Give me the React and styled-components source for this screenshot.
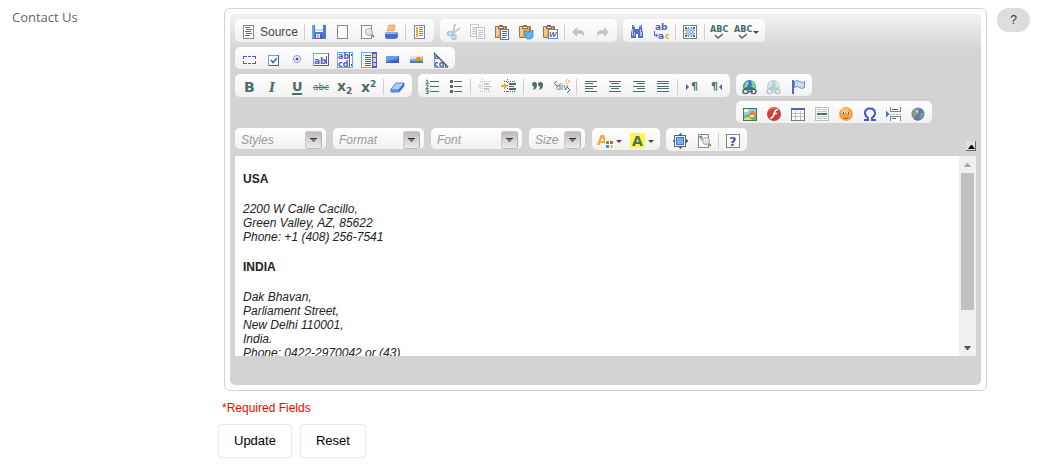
import React from "react";
import styled, { createGlobalStyle, css } from "styled-components";

const GlobalStyle = createGlobalStyle`
  body {
    margin: 0;
    background: #fff;
    font-family: "Liberation Sans", Arial, sans-serif;
    font-size: 12px;
    line-height: 14px;
  }
`;

const Page = styled.form`
  display: grid;
  grid-template-columns: 206px 1fr auto;
  align-items: start;
  padding: 8px 15px 8px 12px;
`;

const FieldLabel = styled.label`
  color: #666;
  font-family: "Open Sans", sans-serif;
  font-size: 13px;
  line-height: 18px;
`;

const Frame = styled.div`
  margin-left: 6px;
  padding: 5px;
  border: 1px solid #d3d3d3;
  border-radius: 6px;
`;

const EditorBox = styled.div`
  padding: 5px 5px 29px;
  border-radius: 5px;
  background: linear-gradient(#f2f2f2, #d3d3d3 38px) #d3d3d3;
`;

const Toolbars = styled.div`
  display: flex;
  flex-direction: column;
  gap: 5px;
  margin-bottom: 5px;
`;

const Row = styled.div`
  display: flex;
  align-items: flex-start;
  gap: ${(p) => p.$gap || 6}px;
`;

const Stack = styled.div`
  display: flex;
  flex-direction: column;
  align-items: flex-start;
  gap: 5px;
`;

const Group = styled.div`
  display: flex;
  align-items: flex-start;
  padding: 3px 2px 1px;
  border-radius: 5px;
  background: linear-gradient(#fff, #f1f1f1);
`;

const ToolButton = styled.button`
  display: flex;
  align-items: center;
  height: 18px;
  padding: 2px 4px 0;
  border: 0;
  background: none;
  color: #474747;
  font: 12px/16px "Liberation Sans", Arial, sans-serif;
  cursor: pointer;

  svg {
    flex: none;
    overflow: visible;
  }

  ${(p) =>
    p.disabled &&
    css`
      cursor: default;
      svg {
        opacity: 0.33;
      }
    `}
`;

const ButtonText = styled.span`
  margin-left: 3px;
`;

const Arrow = styled.span`
  margin: 0 0 0 2px;
  border: 3px solid transparent;
  border-top-color: #474747;
  border-bottom: 0;
`;

const Separator = styled.span`
  width: 1px;
  height: 16px;
  margin: 2px 2px 1px;
  background: #d0d0d0;
`;

const ComboWrap = styled.label`
  position: relative;
  display: block;
  width: ${(p) => p.$width}px;
`;

const ComboSelect = styled.select`
  display: block;
  width: 100%;
  height: 21px;
  padding: 2px 24px 0 6px;
  border: 0;
  border-radius: 5px;
  appearance: none;
  background: linear-gradient(#fff, #f1f1f1);
  color: #999;
  font: italic 12px "Liberation Sans", Arial, sans-serif;
`;

const ComboArrow = styled.span`
  position: absolute;
  top: 3px;
  right: 4px;
  display: flex;
  align-items: center;
  justify-content: center;
  width: 17px;
  height: 18px;
  border-radius: 3px;
  box-sizing: border-box;
  border: 1px solid #cfc9c9;
  border-right-color: #b5aeae;
  border-bottom-color: #c3bcbc;
  background: linear-gradient(#c0b8b8, #efebeb);
  pointer-events: none;
`;

const Collapser = styled.button`
  align-self: flex-end;
  display: flex;
  align-items: flex-end;
  justify-content: center;
  width: 10px;
  height: 10px;
  margin-left: auto;
  padding: 0 0 1px 1px;
  border: 0 solid #6b6b6b;
  border-width: 0 1px 1px 0;
  background: #dfdfdf;
`;

const Contents = styled.div`
  display: flex;
  height: 200px;
  background: #fff;
`;

const Editable = styled.div`
  flex: 1;
  overflow: hidden;
  padding: 16px 8px 0;
  color: #222;
  outline: none;

  p {
    margin: 0 0 16px;
  }
`;

const ScrollTrack = styled.div`
  display: flex;
  flex-direction: column;
  align-items: center;
  width: 17px;
  background: #f0f0f0;
`;

const ScrollEnd = styled.span`
  display: flex;
  align-items: center;
  justify-content: center;
  height: 17px;
`;

const ScrollThumb = styled.div`
  width: 13px;
  height: 137px;
  margin-bottom: auto;
  background: #c1c1c1;
`;

const Required = styled.p`
  margin: 10px 0 9px 4px;
  color: #f00;
`;

const FormButton = styled.button`
  height: 34px;
  padding: 0 15px 2px;
  border: 1px solid #eaeaea;
  border-radius: 4px;
  background: #fff;
  box-shadow: 0 0 1px #e6e6e6;
  color: #000;
  font: 13px "Liberation Sans", Arial, sans-serif;
`;

const HelpButton = styled.button`
  width: 33px;
  height: 24px;
  margin-left: 10px;
  padding: 0;
  border: 0;
  border-radius: 12px;
  background: #ddd;
  color: #1f3a52;
  font: 12px "Liberation Sans", Arial, sans-serif;
`;

const T = "#4f6b6b";
const B = "#5459bd";
const L = "#6aa6f2";
const O = "#f3a847";

const Glyph = ({ x, y, size, fill = T, children, family = "DejaVu Sans", ...rest }) => (
  <text x={x} y={y} fontSize={size} fill={fill} fontFamily={family} {...rest}>
    {children}
  </text>
);

const Clipboard = () => (
  <>
    <rect x="1" y="2" width="12" height="12" rx="1" fill="#b5722c" />
    <rect x="2" y="3" width="9" height="10" fill="#eba450" />
    <path d="M2 3h3v8l-3 2z" fill="#f9c987" />
    <path d="M4 3h1V1h4v2h1v2H4z" fill="#6f7478" />
    <path d="M5 3h4v1H5z" fill="#e9e3d8" />
  </>
);

const Lens = ({ x, y }) => (
  <>
    <path d={`M${x + 2} ${y + 2}l3 3`} stroke="#c8843c" strokeWidth="2" />
    <circle cx={x} cy={y} r="3.5" fill="#dfe5ea" stroke="#a5aaae" />
    <path d={`M${x - 2} ${y}q0-2 2-2`} stroke="#fff" fill="none" />
  </>
);

const Chain = () => (
  <g fill="none" stroke={T} strokeWidth="1.6">
    <rect x="1" y="10.5" width="5" height="4" rx="2" />
    <rect x="9" y="10.5" width="5" height="4" rx="2" />
    <path d="M5 12.5h6M3 10l2-1h5l2 1" />
  </g>
);

const LinkGlobe = () => (
  <>
    <circle cx="7.5" cy="7.5" r="6.5" fill="#3f6fdc" />
    <path d="M3 4l3-2 1 2-2 4-3 1zM9 2l3 1 2 4-2 3-3-2 1-2z" fill="#74e277" />
    <path d="M0 11h15v4H0z" fill="#f8f8f8" />
    <Chain />
  </>
);

const Sheet = ({ color = "#7c8c8a" }) => (
  <rect x="2.5" y="1.5" width="10" height="13" fill="#fff" stroke={color} />
);

const Lines = ({ rows, stroke = T }) => (
  <path
    d={rows.map(([x, y, w]) => `M${x} ${y}.5h${w}`).join("")}
    stroke={stroke}
    fill="none"
  />
);

const AreaLetters = () => (
  <>
    <Glyph x="1" y="7" size="8" fill={B} fontWeight="bold">ab</Glyph>
    <Glyph x="1" y="15" size="8" fill={B} fontWeight="bold">cd</Glyph>
  </>
);

const icons = {
  source: (
    <>
      <Sheet />
      <Lines rows={[[4, 3, 5], [5, 5, 6], [4, 7, 6], [5, 9, 6], [4, 11, 5]]} stroke="#5d7466" />
    </>
  ),
  save: (
    <>
      <path d="M1 1h13l1 1v13H1z" fill="#4a78dc" />
      <path d="M1 1h2v13H1z" fill={L} />
      <rect x="4" y="1" width="8" height="7" fill="#fff" />
      <rect x="4" y="5" width="8" height="2" fill="#c6dcf5" />
      <rect x="4" y="10" width="8" height="5" fill="#4c64b0" />
      <rect x="5" y="10" width="4" height="4" fill="#d9e6f6" />
      <rect x="6" y="11" width="2" height="3" fill={O} />
    </>
  ),
  newpage: <Sheet />,
  preview: (
    <>
      <Sheet />
      <Lens x={10} y={8} />
    </>
  ),
  print: (
    <>
      <path d="M6 1h6l-1 6H4z" fill="#f3c16f" stroke="#dd9137" strokeWidth=".6" />
      <path d="M3 8h11l1 2v3l-2 2H3l-1-2v-3z" fill="#4b73d8" />
      <path d="M3 8h10l1 2H2z" fill="#86b2f5" />
      <path d="M3 12h10" stroke="#3d60c0" />
    </>
  ),
  templates: (
    <>
      <Sheet />
      <path d="M4 3h2v10H4z" fill={O} />
      <Lines rows={[[7, 3, 4], [7, 5, 4], [7, 7, 4], [7, 9, 4], [7, 11, 4]]} stroke="#8c8468" />
    </>
  ),
  cut: (
    <>
      <path d="M9 0l-2 9M14 4l-8 6" stroke="#667" strokeWidth="2" />
      <ellipse cx="4" cy="9.5" rx="2.5" ry="1.8" fill="none" stroke="#3260c6" strokeWidth="2" />
      <ellipse cx="8" cy="13" rx="1.8" ry="2.2" fill="none" stroke="#3260c6" strokeWidth="2" />
    </>
  ),
  copy: (
    <>
      <rect x="0.5" y="0.5" width="8" height="12" fill="#fff" stroke={T} />
      <Lines rows={[[2, 3, 5], [2, 5, 5], [2, 7, 5], [2, 9, 5]]} />
      <rect x="6.5" y="3.5" width="8" height="11" fill="#fff" stroke={T} />
      <Lines rows={[[8, 6, 5], [8, 8, 5], [8, 10, 5], [8, 12, 4]]} />
    </>
  ),
  paste: (
    <>
      <Clipboard />
      <rect x="6.5" y="5.5" width="8" height="10" fill="#fff" stroke="#4a72d8" />
      <Lines rows={[[8, 7, 5], [8, 9, 5], [8, 11, 5], [8, 13, 4]]} stroke={B} />
    </>
  ),
  pastetext: (
    <>
      <Clipboard />
      <path d="M6 7l4 1 5-2v7l-2 2H9l-2-3z" fill="#55b5ee" stroke="#3c80c4" strokeWidth=".7" />
    </>
  ),
  pasteword: (
    <>
      <Clipboard />
      <rect x="6.5" y="5.5" width="9" height="9" fill="#fff" stroke="#5b83db" />
      <Glyph x="7" y="13" size="8" fontWeight="bold" fontStyle="italic" family="Liberation Sans">W</Glyph>
    </>
  ),
  undo: <path d="M1 8l5-5v3h4q4 1 3 7-1-4-7-3v3z" fill={T} />,
  redo: <path d="M14 8L9 3v3H6q-5 1-4 7 1-4 7-3v3z" fill={T} />,
  find: (
    <>
      <path d="M3 1h3v4h4V1h3v4l1 4v5H9v-4H7v4H2V9l1-4z" fill="#6068be" />
      <path d="M3 5h1v7H3zM11 5h1v7h-1zM4 1h2v2H4zM10 1h2v2h-2z" fill="#9acbf9" />
      <path d="M5 8h1v4H5zM12 8h1v4h-1z" fill="#a9b7df" />
    </>
  ),
  replace: (
    <>
      <Glyph x="2" y="6" size="9" fill={B} fontWeight="bold">ab</Glyph>
      <Glyph x="5" y="15" size="9" fill={B} fontWeight="bold">a</Glyph>
      <Glyph x="12" y="15" size="8" fill={O} fontWeight="bold">c</Glyph>
      <path d="M1.500 7v4.500h3M3 9.500l2 2-2 2" fill="none" stroke={B} />
    </>
  ),
  selectall: (
    <>
      <rect x="1.5" y="1.5" width="13" height="13" fill="#fff" stroke="#6f8585" />
      <rect x="4" y="4" width="8" height="8" fill="#aac4ee" />
      <path d="M3 3h2v2H3zM11 3h2v2h-2zM3 11h2v2H3zM11 11h2v2h-2zM6 3h1v1H6zM9 3h1v1H9zM6 12h1v1H6zM9 12h1v1H9zM3 6h1v1H3zM3 9h1v1H3zM12 6h1v1h-1zM12 9h1v1h-1z" fill={T} />
    </>
  ),
  abc: (
    <>
      <Glyph x="-1" y="8" size="9" fontWeight="bold" family="DejaVu Sans Condensed">ABC</Glyph>
      <path d="M4 11l3 3 5-4" fill="none" stroke={T} strokeWidth="1.6" />
    </>
  ),
  form: <path d="M2.5 7V4.5h3M7 4.5h3M11 4.5h3V7M2.5 9v2.500h3M7 11.500h3M11 11.500h3V9" fill="none" stroke={B} />,
  checkbox: (
    <>
      <rect x="3.5" y="3.5" width="10" height="10" fill="#fff" stroke={B} />
      <path d="M3.5 14V3.5H13" fill="none" stroke={L} />
      <path d="M6 8l2 2.500 4-4.500" fill="none" stroke="#3f62a8" strokeWidth="1.500" />
    </>
  ),
  radio: (
    <>
      <circle cx="8" cy="7" r="3.5" fill="#fff" stroke="#738fe0" />
      <circle cx="8" cy="7" r="1.5" fill="#4651b8" />
    </>
  ),
  textfield: (
    <>
      <rect x=".5" y="1.5" width="15" height="12" fill="#fff" stroke={B} />
      <path d="M.5 14V1.5H15" fill="none" stroke={L} />
      <Glyph x="1" y="12" size="9" fill={B} fontWeight="bold">ab</Glyph>
      <path d="M13.5 4v8" stroke={B} />
    </>
  ),
  textarea: (
    <>
      <rect x=".5" y=".5" width="15" height="15" fill="#fff" stroke={L} />
      <AreaLetters />
      <path d="M12.5 1v14M14 2v2M14 12v2" stroke={B} />
    </>
  ),
  select: (
    <>
      <rect x=".5" y=".5" width="15" height="15" fill="#fff" stroke={L} />
      <Lines rows={[[4, 3, 6], [4, 5, 6], [4, 7, 6], [4, 9, 6], [4, 11, 6], [4, 13, 6]]} stroke={B} />
      <path d="M2 3h1v1H2zM2 7h1v1H2zM2 11h1v1H2z" fill={O} />
      <rect x="11" y="0" width="5" height="16" fill={B} />
      <path d="M12 2h3v3h-3zM12 11h3v3h-3z" fill="#f7c37d" />
      <path d="M12 6h3v4h-3z" fill="#c5d6f7" />
    </>
  ),
  button: (
    <>
      <rect x="1" y="4" width="13" height="7" fill="#3d5cc4" />
      <path d="M1 4h12v4L1 10z" fill="#6b9cee" />
      <path d="M2 9h11V6z" fill="#4b70d2" />
    </>
  ),
  imagebutton: (
    <>
      <rect x="1" y="4" width="13" height="7" fill="#7ba9ee" />
      <path d="M1 4h12v3H1z" fill="#e7e3ce" />
      <path d="M6 8l2-3h3l3 4H6z" fill="#e68a35" />
      <path d="M1 9h13v2H1z" fill="#4d74ce" />
    </>
  ),
  hidden: (
    <>
      <path d="M1 0l14 15H1z" fill="#fff" />
      <path d="M1.5 0v15.500H15" fill="none" stroke={L} />
      <clipPath id="hiddenCut">
        <path d="M0 0l16 16H0z" />
      </clipPath>
      <g clipPath="url(#hiddenCut)">
        <AreaLetters />
        <path d="M12.5 10v5" stroke={B} />
      </g>
      <path d="M1 1l14 14" stroke="#556" strokeWidth="1.4" />
    </>
  ),
  bold: <Glyph x="3" y="13" size="14" fontWeight="bold">B</Glyph>,
  italic: <Glyph x="4" y="13" size="13" fontWeight="bold" fontStyle="italic" family="DejaVu Serif">I</Glyph>,
  underline: (
    <>
      <Glyph x="3" y="12" size="13" fontWeight="bold">U</Glyph>
      <path d="M3 14h10v2H3z" fill={T} />
    </>
  ),
  strike: (
    <>
      <Glyph x="0" y="11" size="9">abc</Glyph>
      <path d="M0 8.5h16" stroke={T} />
    </>
  ),
  sub: (
    <>
      <Glyph x="0" y="12" size="14" fontWeight="bold">x</Glyph>
      <Glyph x="9" y="15" size="9" fontWeight="bold">2</Glyph>
    </>
  ),
  sup: (
    <>
      <Glyph x="0" y="13" size="14" fontWeight="bold">x</Glyph>
      <Glyph x="9" y="8" size="9" fontWeight="bold">2</Glyph>
    </>
  ),
  eraser: (
    <>
      <path d="M6 4h8l-5 6H1z" fill="#a5cdf9" />
      <path d="M1 10h8v3H1z" fill="#6795ec" />
      <path d="M14 4v3l-5 6v-3z" fill="#3c5fcb" />
      <path d="M6 4h8v3l-5 6H1v-3z" fill="none" stroke="#4a68c9" strokeWidth=".8" />
    </>
  ),
  numbered: (
    <>
      <Glyph x="1" y="5" size="6" fontWeight="bold">1</Glyph>
      <Glyph x="1" y="10" size="6" fontWeight="bold">2</Glyph>
      <Glyph x="1" y="15" size="6" fontWeight="bold">3</Glyph>
      <Lines rows={[[6, 2, 9], [6, 7, 9], [6, 12, 9]]} />
    </>
  ),
  bulleted: (
    <>
      <path d="M2 1h3v3H2zM2 6h3v3H2zM2 11h3v3H2z" fill={T} />
      <Lines rows={[[6, 2, 8], [6, 7, 8], [6, 12, 8]]} />
    </>
  ),
  outdent: (
    <>
      <path d="M0 7l4-4v3h2v2H4v3z" fill={O} />
      <path d="M7 4h5v2H7zM7 7h8v1H7zM7 9h5v2H7z" fill={T} />
      <path d="M3 2.500h12M3 12.500h12" stroke={T} strokeDasharray="1 1" />
      <path d="M5.500 0v15" stroke={T} strokeDasharray="1 2" />
    </>
  ),
  indent: (
    <>
      <path d="M6 7L3 4v2H0v2h3v3z" fill={O} />
      <path d="M8 4h7v2H8zM8 7h5v1H8zM8 9h7v2H8z" fill={T} />
      <path d="M3 2.500h12M3 12.500h12" stroke={T} strokeDasharray="1 1" />
      <path d="M6.500 0v15" stroke={T} strokeDasharray="1 2" />
    </>
  ),
  quote: (
    <path d="M2 5q0-2 2.500-2T7 5.500Q7 10 3 11q1-2 1-3-2-1-2-3zM8 5q0-2 2.500-2T13 5.500Q13 10 9 11q1-2 1-3-2-1-2-3z" fill={T} />
  ),
  div: (
    <>
      <Glyph x="2" y="11" size="8">div</Glyph>
      <path d="M3 2L0 4.500 3 7M13 8l3 3-3 3" fill="none" stroke={T} />
      <path d="M13.500 .5l2 2-2 2-2-2z" fill="#fff" stroke={O} />
    </>
  ),
  left: <Lines rows={[[2, 2, 12], [2, 4, 8], [2, 7, 12], [2, 9, 8], [2, 12, 12]]} />,
  center: <Lines rows={[[2, 2, 12], [4, 4, 8], [2, 7, 12], [4, 9, 8], [2, 12, 12]]} />,
  right: <Lines rows={[[2, 2, 12], [6, 4, 8], [2, 7, 12], [6, 9, 8], [2, 12, 12]]} />,
  justify: <Lines rows={[[2, 2, 12], [2, 4, 12], [2, 7, 12], [2, 9, 12], [2, 12, 12]]} />,
  ltr: (
    <>
      <path d="M2 5l3 3-3 3z" fill={B} />
      <Glyph x="7" y="11" size="11" fontWeight="bold">¶</Glyph>
    </>
  ),
  rtl: (
    <>
      <Glyph x="3" y="11" size="11" fontWeight="bold">¶</Glyph>
      <path d="M14 5l-3 3 3 3z" fill={B} />
    </>
  ),
  link: <LinkGlobe />,
  unlink: <LinkGlobe />,
  flag: (
    <>
      <path d="M2 1h2v14H2z" fill="#5a66cc" />
      <path d="M4.500 2.500q3-2 5 0t5 0v6q-3 2-5 0t-5 0z" fill="#d8dadd" stroke="#5b96ec" />
    </>
  ),
  image: (
    <>
      <rect x="1.5" y="2.5" width="13" height="12" fill="#8fd2f7" stroke={T} />
      <path d="M2 3h4v3H2z" fill="#fff5b0" />
      <path d="M2 10l4-2 4 2 4-1v5H2z" fill="#79b957" />
      <path d="M2 12l5-1 3 3H2z" fill="#e9dc79" />
      <path d="M7 8l2-3h3l2 3v1H7z" fill="#ee8438" />
      <path d="M8 9h4v2H8z" fill="#fbdfb2" />
    </>
  ),
  flash: (
    <>
      <circle cx="8" cy="8" r="7" fill="#c9403a" />
      <path d="M3 5q2-3 6-3" stroke="#e98a82" fill="none" />
      <path d="M12 3.500q-3 0-3.500 3.500T4.500 12.500M7 7.500h4" stroke="#fff" strokeWidth="1.6" fill="none" />
    </>
  ),
  table: (
    <>
      <rect x="1.5" y="2.5" width="13" height="12" fill="#fff" stroke="#6d8080" />
      <path d="M1 2h14v2H1z" fill="#4f64bc" />
      <path d="M2 7.500h12M2 10.500h12M5.500 5v9M10.500 5v9" stroke="#b5bcbc" />
    </>
  ),
  hr: (
    <>
      <rect x="1.5" y="1.5" width="13" height="13" fill="#fff" stroke="#b9c1c1" />
      <Lines rows={[[3, 3, 10], [3, 5, 10], [3, 10, 10], [3, 12, 10]]} stroke="#c2c8c8" />
      <path d="M3 7h10v2H3z" fill={T} />
    </>
  ),
  smiley: (
    <>
      <circle cx="8" cy="8" r="7" fill="#f6a34e" />
      <ellipse cx="7" cy="4" rx="4" ry="2" fill="#fbc384" />
      <path d="M4 6h3v1H4zM9 6h3v1H9z" fill="#fff" />
      <path d="M5 6h1v2H5zM10 6h1v2h-1z" fill="#555" />
      <path d="M5 11q3 2 6 0-1 2-3 2t-3-2z" fill="#b2432d" />
    </>
  ),
  omega: (
    <path d="M2 14h4v-2Q3 10 3 7q0-4.500 5-4.500T13 7q0 3-3 5v2h4" fill="none" stroke="#4658cc" strokeWidth="2" />
  ),
  pagebreak: (
    <>
      <path d="M0 5l3 3-3 3z" fill="#4c6fda" />
      <path d="M4.500 1v4.500h10V1M4.500 15v-4.500h10V15" fill="#fff" stroke="#778a88" />
      <path d="M4 8.500h11" stroke="#a7b2b2" strokeDasharray="2 1" />
      <Lines rows={[[6, 3, 6], [6, 12, 4]]} stroke={T} />
    </>
  ),
  globe: (
    <>
      <circle cx="8" cy="8" r="6.500" fill="#5f7ab8" />
      <path d="M3 4l4-2 3 1-2 2 1 3-3 1-2 3-2-4zM10 8l4-2-1 5-3 2z" fill="#8c9e78" />
      <path d="M6 5l2-1v2l-2 1z" fill="#dbe3dc" />
      <path d="M4 13q5 3 9-2" fill="none" stroke="#6a759a" />
    </>
  ),
  textcolor: (
    <>
      <Glyph x="-1" y="12" size="14" fill={O} fontWeight="bold">A</Glyph>
      <path d="M7 7h9v9H7z" fill="#fafafa" />
      <path d="M8 8h3v3H8z" fill="#3fae49" />
      <path d="M12 8h3v3h-3z" fill="#ee4b4b" />
      <path d="M8 12h3v3H8z" fill="#4a82f0" />
      <path d="M12 12h3v3h-3z" fill="#f8c640" />
    </>
  ),
  bgcolor: (
    <>
      <path d="M0 0h15v15H0z" fill="#fdf73f" />
      <Glyph x="2" y="13" size="14" fontWeight="bold">A</Glyph>
    </>
  ),
  maximize: (
    <>
      <rect x="2.5" y="2.5" width="11" height="11" fill="#e8f1fc" stroke={T} />
      <rect x="4.5" y="4.5" width="7" height="7" fill="#78adf5" stroke="#4273d6" />
      <path d="M8 0l3 3H5zM8 16l3-3H5zM0 8l3-3v6zM16 8l-3-3v6z" fill={T} />
    </>
  ),
  blocks: (
    <>
      <Sheet />
      <Glyph x="3" y="7" size="6" fontWeight="bold">¶</Glyph>
      <Lens x={10} y={8} />
    </>
  ),
  about: (
    <>
      <rect x="1.5" y="1.5" width="13" height="13" fill="#fff" stroke="#7b8785" />
      <Glyph x="4" y="13" size="13" fill="#4755bd" fontWeight="bold">?</Glyph>
    </>
  ),
};

const crisp = [
  "source", "newpage", "templates", "copy", "paste", "selectall", "form", "textfield",
  "textarea", "select", "left", "center", "right", "justify", "numbered", "bulleted",
  "table", "hr", "pagebreak", "save", "maximize", "indent", "outdent", "textcolor",
];

const Icon = ({ name }) => (
  <svg
    width="16"
    height="16"
    viewBox="0 0 16 16"
    aria-hidden="true"
    shapeRendering={crisp.includes(name) ? "crispEdges" : "auto"}
  >
    {icons[name]}
  </svg>
);

const Tool = ({ icon, title, text, menu, disabled }) => (
  <ToolButton type="button" aria-label={title} disabled={disabled}>
    <Icon name={icon} />
    {text && <ButtonText>{text}</ButtonText>}
    {menu && <Arrow />}
  </ToolButton>
);

// "-" in an items list is a separator
const ToolGroup = ({ items }) => (
  <Group>
    {items.map((item, index) =>
      item === "-" ? <Separator key={index} /> : <Tool key={index} {...item} />
    )}
  </Group>
);

const Combo = ({ name, width }) => (
  <ComboWrap $width={width}>
    <ComboSelect aria-label={name} defaultValue={name}>
      <option>{name}</option>
    </ComboSelect>
    <ComboArrow>
      <svg width="7" height="4" viewBox="0 0 7 4" aria-hidden="true">
        <path d="M0 0h7L4 4H3z" fill="#777" />
        <path d="M0 0h7v1H0z" fill="#333" />
      </svg>
    </ComboArrow>
  </ComboWrap>
);

const documentTools = [
  { icon: "source", title: "Source", text: "Source" },
  "-",
  { icon: "save", title: "Save" },
  { icon: "newpage", title: "New Page" },
  { icon: "preview", title: "Preview" },
  { icon: "print", title: "Print" },
  "-",
  { icon: "templates", title: "Templates" },
];

const clipboardTools = [
  { icon: "cut", title: "Cut", disabled: true },
  { icon: "copy", title: "Copy", disabled: true },
  { icon: "paste", title: "Paste" },
  { icon: "pastetext", title: "Paste as plain text" },
  { icon: "pasteword", title: "Paste from Word" },
  "-",
  { icon: "undo", title: "Undo", disabled: true },
  { icon: "redo", title: "Redo", disabled: true },
];

const editingTools = [
  { icon: "find", title: "Find" },
  { icon: "replace", title: "Replace" },
  "-",
  { icon: "selectall", title: "Select All" },
  "-",
  { icon: "abc", title: "Check Spelling" },
  { icon: "abc", title: "Spell Check As You Type", menu: true },
];

const formTools = [
  { icon: "form", title: "Form" },
  { icon: "checkbox", title: "Checkbox" },
  { icon: "radio", title: "Radio Button" },
  { icon: "textfield", title: "Text Field" },
  { icon: "textarea", title: "Textarea" },
  { icon: "select", title: "Selection Field" },
  { icon: "button", title: "Button" },
  { icon: "imagebutton", title: "Image Button" },
  { icon: "hidden", title: "Hidden Field" },
];

const styleTools = [
  { icon: "bold", title: "Bold" },
  { icon: "italic", title: "Italic" },
  { icon: "underline", title: "Underline" },
  { icon: "strike", title: "Strike Through" },
  { icon: "sub", title: "Subscript" },
  { icon: "sup", title: "Superscript" },
  "-",
  { icon: "eraser", title: "Remove Format" },
];

const paragraphTools = [
  { icon: "numbered", title: "Numbered List" },
  { icon: "bulleted", title: "Bulleted List" },
  "-",
  { icon: "outdent", title: "Decrease Indent", disabled: true },
  { icon: "indent", title: "Increase Indent" },
  "-",
  { icon: "quote", title: "Block Quote" },
  { icon: "div", title: "Create Div Container" },
  "-",
  { icon: "left", title: "Align Left" },
  { icon: "center", title: "Center" },
  { icon: "right", title: "Align Right" },
  { icon: "justify", title: "Justify" },
  "-",
  { icon: "ltr", title: "Text direction from left to right" },
  { icon: "rtl", title: "Text direction from right to left" },
];

const linkTools = [
  { icon: "link", title: "Link" },
  { icon: "unlink", title: "Unlink", disabled: true },
  { icon: "flag", title: "Anchor" },
];

const insertTools = [
  { icon: "image", title: "Image" },
  { icon: "flash", title: "Flash" },
  { icon: "table", title: "Table" },
  { icon: "hr", title: "Horizontal Line" },
  { icon: "smiley", title: "Smiley" },
  { icon: "omega", title: "Special Character" },
  { icon: "pagebreak", title: "Page Break" },
  { icon: "globe", title: "IFrame" },
];

const colorTools = [
  { icon: "textcolor", title: "Text Color", menu: true },
  { icon: "bgcolor", title: "Background Color", menu: true },
];

const viewTools = [
  { icon: "maximize", title: "Maximize" },
  { icon: "blocks", title: "Show Blocks" },
  "-",
  { icon: "about", title: "About" },
];

const Editor = () => (
  <Frame>
    <EditorBox>
      <Toolbars>
        <Row>
          <ToolGroup items={documentTools} />
          <ToolGroup items={clipboardTools} />
          <ToolGroup items={editingTools} />
        </Row>
        <Row>
          <ToolGroup items={formTools} />
        </Row>
        <Row>
          <ToolGroup items={styleTools} />
          <ToolGroup items={paragraphTools} />
          <Stack>
            <ToolGroup items={linkTools} />
            <ToolGroup items={insertTools} />
          </Stack>
        </Row>
        <Row $gap={7}>
          <Combo name="Styles" width={91} />
          <Combo name="Format" width={91} />
          <Combo name="Font" width={91} />
          <Combo name="Size" width={56} />
          <Row>
            <ToolGroup items={colorTools} />
            <ToolGroup items={viewTools} />
          </Row>
          <Collapser type="button" aria-label="Collapse Toolbar">
            <svg width="7" height="4" viewBox="0 0 7 4" aria-hidden="true">
              <path d="M3 0h1l3 4H0z" fill="#000" />
            </svg>
          </Collapser>
        </Row>
      </Toolbars>
      <Contents>
        <Editable
          id="contact"
          role="textbox"
          aria-labelledby="contact-label"
          contentEditable
          suppressContentEditableWarning
          spellCheck={false}
        >
          <p><strong>USA</strong></p>
          <p>
            <em>
              2200 W Calle Cacillo,<br />
              Green Valley, AZ, 85622<br />
              Phone: +1 (408) 256-7541
            </em>
          </p>
          <p><strong>INDIA</strong></p>
          <p>
            <em>
              Dak Bhavan,<br />
              Parliament Street,<br />
              New Delhi 110001,<br />
              India.<br />
              Phone: 0422-2970042 or (43)
            </em>
          </p>
        </Editable>
        <ScrollTrack>
          <ScrollEnd>
            <svg width="7" height="4" viewBox="0 0 7 4" aria-hidden="true">
              <path d="M3 0h1l3 4H0z" fill="#a3a3a3" />
            </svg>
          </ScrollEnd>
          <ScrollThumb />
          <ScrollEnd>
            <svg width="7" height="4" viewBox="0 0 7 4" aria-hidden="true">
              <path d="M0 0h7L4 4H3z" fill="#505050" />
            </svg>
          </ScrollEnd>
        </ScrollTrack>
      </Contents>
    </EditorBox>
  </Frame>
);

const App = () => {
  return (
    <>
      <GlobalStyle />
      <Page onSubmit={(e) => e.preventDefault()}>
        <FieldLabel id="contact-label" htmlFor="contact">Contact Us</FieldLabel>
        <div>
          <Editor />
          <Required>*Required Fields</Required>
          <Row $gap={8}>
            <FormButton type="submit">Update</FormButton>
            <FormButton type="reset">Reset</FormButton>
          </Row>
        </div>
        <HelpButton type="button">?</HelpButton>
      </Page>
    </>
  );
};

export default App;
